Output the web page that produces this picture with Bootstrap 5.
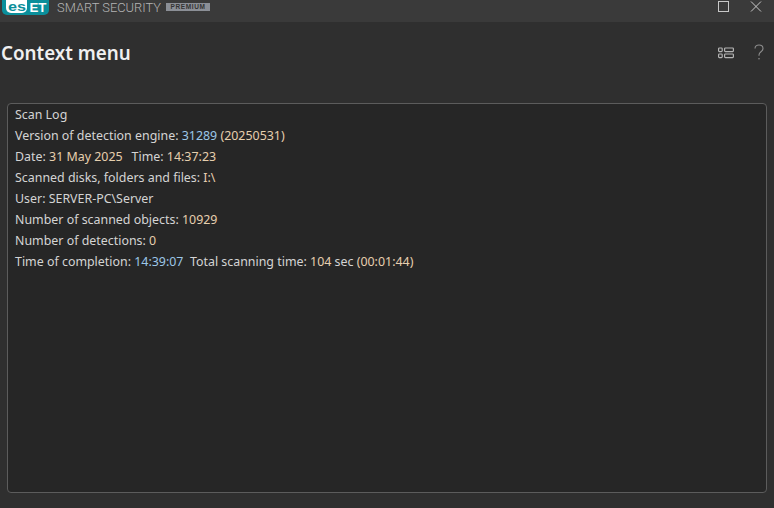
<!DOCTYPE html>
<html lang="en">
<head>
<meta charset="utf-8">
<title>ESET Smart Security Premium</title>
<link href="https://cdn.jsdelivr.net/npm/bootstrap@5.3.0/dist/css/bootstrap.min.css" rel="stylesheet">
<style>
html,body{height:100%;margin:0}
body{width:774px;height:508px;overflow:hidden;background:#2f2f2f;font-family:"Noto Sans","Open Sans","Liberation Sans",sans-serif;color:#dcdcdc}
.shell{height:508px}
.topbar{height:22px;background:#3a3a3a;flex:none}
.logo-svg{margin-left:2px;align-self:flex-start;flex:none}
.logo-txt{font-family:"Liberation Sans",sans-serif;font-weight:700;font-size:13px}
.product{font-family:Roboto,"Liberation Sans",sans-serif;font-weight:300;font-size:12.900px;color:#b4b4b4;margin-left:7px;line-height:15px;align-self:flex-start;white-space:nowrap}
.tier{font-family:"Liberation Sans",sans-serif;font-size:6.500px;font-weight:700;letter-spacing:.6px;background:#8b8f96;color:#333;margin-left:5px;width:44px;height:8px;line-height:8px;text-align:center;margin-top:3px;align-self:flex-start}
.winbtn{width:32px;height:14px;margin-bottom:8px;align-self:flex-start}
.win-end{margin-right:2px}
.headbar{height:81px;flex:none;padding-left:1px}
.page-title{font-size:18.800px;font-weight:600;line-height:26px;margin:18px 0 0;color:#f0f0f0}
.head-tools{margin-top:22px;padding-right:10px;gap:20px}
.tool-list{margin-top:3px}
.log-box{flex:1 1 auto;margin:0 7px 15px 7px;background:#262626;border:1px solid #5c5c5c;border-radius:4px;padding:0 7px}
.log-line{font-size:12.420px;line-height:21px;height:21px;white-space:pre;color:#d4d4d4}
.v{color:#9cc7e8}
.o{color:#e6cfae}
.wide-gap{margin-left:2.500px}
</style>
</head>
<body>
<div class="shell d-flex flex-column">
  <div class="topbar d-flex">
    <svg class="logo-svg" width="48" height="16" viewBox="0 0 48 16">
      <path d="M0 0H47V10a5 5 0 0 1-5 5H5a5 5 0 0 1-5-5Z" fill="#0b8f9b"/>
      <path d="M4 0H25V8a5 5 0 0 1-5 5H9a5 5 0 0 1-5-5Z" fill="#fff"/>
      <text class="logo-txt" x="6" y="11" textLength="18" lengthAdjust="spacingAndGlyphs" fill="#0b8f9b">es</text>
      <text class="logo-txt" x="27.500" y="11.500" textLength="17" lengthAdjust="spacingAndGlyphs" fill="#fff">ET</text>
    </svg>
    <div class="product">SMART SECURITY</div>
    <div class="tier">PREMIUM</div>
    <div class="ms-auto d-flex win-end">
      <div class="winbtn d-flex justify-content-center">
        <svg width="12" height="12" viewBox="0 0 12 12"><rect x=".5" y="1.500" width="10" height="10" fill="none" stroke="#c8c8c8"/></svg>
      </div>
      <div class="winbtn d-flex justify-content-center">
        <svg width="12" height="12" viewBox="0 0 12 12"><path d="M1 1.500 11 11.500M11 1.500 1 11.500" fill="none" stroke="#c8c8c8"/></svg>
      </div>
    </div>
  </div>
  <div class="headbar d-flex justify-content-between">
    <h1 class="page-title">Context menu</h1>
    <div class="head-tools d-flex align-items-start">
      <svg class="tool-list" width="16" height="12" viewBox="0 0 16 12" fill="none" stroke="#b4b4b4" stroke-width="1.200"><rect x=".6" y="1" width="3.600" height="3.600" rx=".8"/><rect x=".6" y="7" width="3.600" height="3.600" rx=".8"/><rect x="6.600" y="1" width="8.800" height="3.600" rx=".8"/><rect x="6.600" y="7" width="8.800" height="3.600" rx=".8"/></svg>
      <svg width="10" height="17" viewBox="0 0 10 17" fill="none" stroke="#8e8e8e" stroke-width="1.100"><path d="M1 4.600C1 2.400 2.700 1 5 1s4 1.400 4 3.500c0 1.600-.9 2.500-2 3.300-1.200.9-2 1.600-2 3.200v.8"/><circle cx="5" cy="14.800" r=".8" fill="#8e8e8e" stroke="none"/></svg>
    </div>
  </div>
  <div class="log-box">
    <div class="log-line">Scan Log</div>
    <div class="log-line">Version of detection engine: <span class="v">31289</span> <span class="o">(20250531)</span></div>
    <div class="log-line">Date: <span class="o">31 May 2025</span>  <span class="wide-gap">Time:</span> <span class="o">14:37:23</span></div>
    <div class="log-line">Scanned disks, folders and files: <span class="o">I:\</span></div>
    <div class="log-line">User: SERVER-PC\Server</div>
    <div class="log-line">Number of scanned objects: <span class="o">10929</span></div>
    <div class="log-line">Number of detections: <span class="o">0</span></div>
    <div class="log-line">Time of completion: <span class="v">14:39:07</span>  Total scanning time: <span class="o">104</span> sec <span class="o">(00:01:44)</span></div>
  </div>
</div>
<script src="https://cdn.jsdelivr.net/npm/bootstrap@5.3.0/dist/js/bootstrap.bundle.min.js"></script>
</body>
</html>
